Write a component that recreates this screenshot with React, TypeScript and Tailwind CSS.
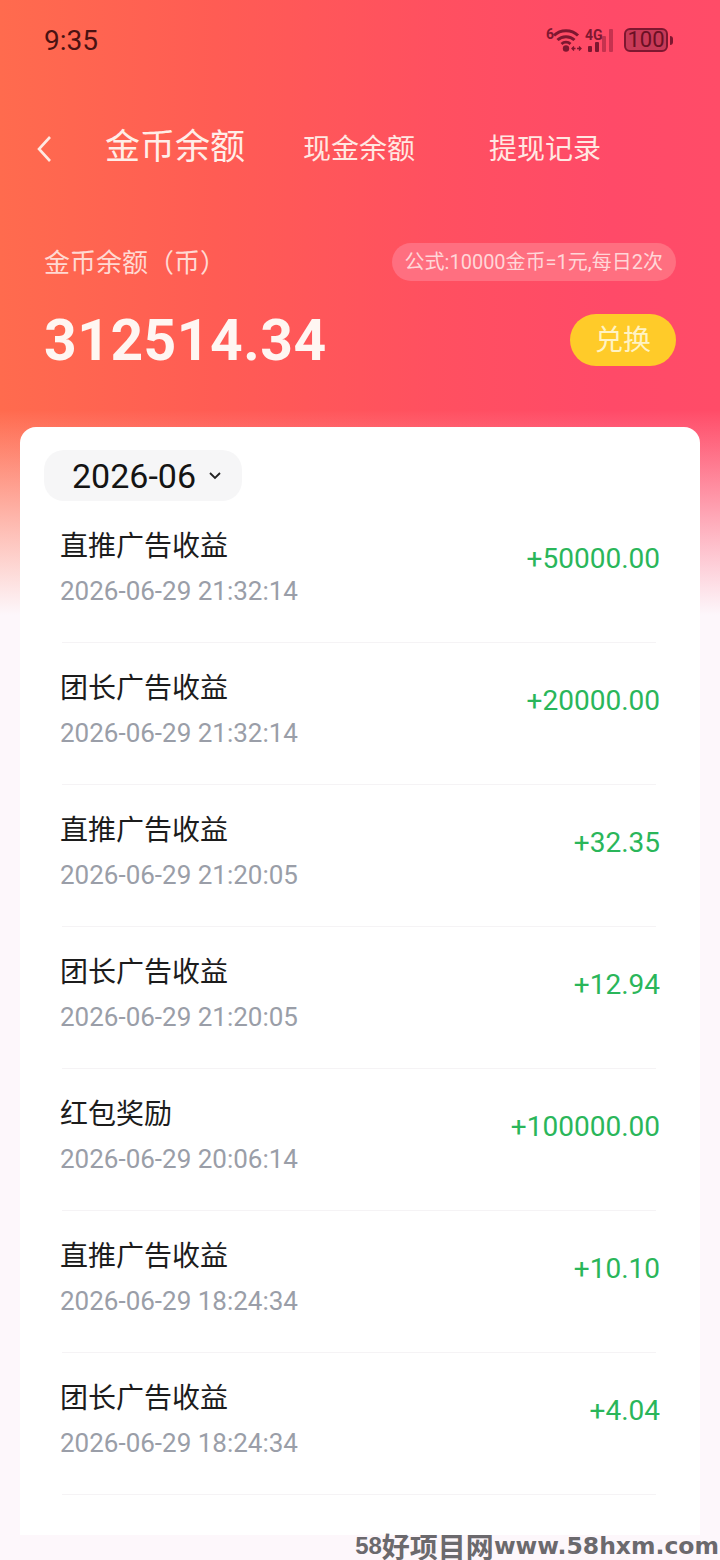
import React from "react";

const rows = [
  { title: "直推广告收益", time: "2026-06-29 21:32:14", amount: "+50000.00" },
  { title: "团长广告收益", time: "2026-06-29 21:32:14", amount: "+20000.00" },
  { title: "直推广告收益", time: "2026-06-29 21:20:05", amount: "+32.35" },
  { title: "团长广告收益", time: "2026-06-29 21:20:05", amount: "+12.94" },
  { title: "红包奖励", time: "2026-06-29 20:06:14", amount: "+100000.00" },
  { title: "直推广告收益", time: "2026-06-29 18:24:34", amount: "+10.10" },
  { title: "团长广告收益", time: "2026-06-29 18:24:34", amount: "+4.04" },
];

const font = "font-['Roboto','Noto_Sans_CJK_SC',sans-serif]";

function StatusIcons() {
  return (
    <div className="flex items-center text-[#7e1730]">
      <svg width="38" height="34" viewBox="0 -4 38 34" fill="none" stroke="currentColor">
        <text x="1" y="12" fontSize="14" fontWeight="700" fill="currentColor" stroke="none" fontFamily="Roboto">6</text>
        <path d="M9 8.5C15.5 2 26.5 2 33 8.5" strokeWidth="3" />
        <path d="M12.5 13C17 8.5 25 8.5 29.5 13" strokeWidth="3" />
        <path d="M16.5 17C19 14.5 23 14.5 25.5 17" strokeWidth="2.8" />
        <circle cx="21" cy="21.5" r="3.2" fill="currentColor" stroke="none" />
        <path d="M27 21.5h3.5M29 19.5l-2 2 2 2M32 21.5h3.5M34 19.5l2 2-2 2" strokeWidth="1.3" />
      </svg>
      <svg width="33" height="34" viewBox="0 -4 33 34" fill="currentColor" className="ml-[1px]">
        <text x="1" y="13" fontSize="14" fontWeight="700" fontFamily="Roboto">4G</text>
        <rect x="4" y="19" width="4" height="6" rx="1" />
        <rect x="11" y="15" width="4" height="10" rx="1" />
        <rect x="18" y="9" width="4" height="16" rx="1" opacity="0.45" />
        <rect x="25" y="2" width="4" height="23" rx="1" opacity="0.45" />
      </svg>
      <div className="ml-[7px] flex items-center gap-[2px]">
        <div className={`flex h-[24px] w-[44px] items-center justify-center rounded-[6px] border-2 border-[#7e1730] bg-[#c83a58] text-[22px] leading-none text-[#6a1024] ${font}`}>
          100
        </div>
        <div className="h-[9px] w-[3px] rounded-r-sm bg-[#7e1730]" />
      </div>
    </div>
  );
}

function Row({ title, time, amount }: { title: string; time: string; amount: string }) {
  return (
    <div className="relative flex h-[142px] items-start justify-between px-[60px] pt-[28px]">
      <div className="flex flex-col">
        <span className="text-[28px] leading-[36px] text-[#1c1c1c]">{title}</span>
        <span className="mt-[8px] text-[26px] leading-[36px] text-[#9a9ea8]">{time}</span>
      </div>
      <span className="mt-[12px] text-[28px] leading-[36px] text-[#2ab65a]">{amount}</span>
      <div className="absolute bottom-0 left-[62px] right-[64px] h-px bg-[#f5f3f5]" />
    </div>
  );
}

export default function App() {
  return (
    <div
      className={`relative flex h-[1560px] w-[720px] flex-col overflow-hidden bg-[linear-gradient(180deg,rgba(253,247,251,0)_0px,rgba(253,247,251,0)_410px,rgba(253,247,251,0.55)_520px,#fdf7fb_615px),linear-gradient(90deg,#ff6b4e_0%,#ff5c54_30%,#ff5060_60%,#ff4a68_85%,#ff4c68_100%)] ${font}`}
    >
      {/* status bar */}
      <div className="flex h-[80px] items-center justify-between pl-[44px] pr-[47px]">
        <span className="mt-[2px] text-[28px] leading-none text-[#4a1212]">9:35</span>
        <StatusIcons />
      </div>

      {/* navigation tabs */}
      <div className="flex h-[136px] items-center pl-[34px]">
        <svg width="22" height="32" viewBox="0 0 22 32" fill="none" stroke="#ffe9e2" strokeWidth="2.6" className="mt-[2px]">
          <path d="M16 4L5 16l11 12" />
        </svg>
        <span className="ml-[49px] text-[35px] text-[#ffeee8]">金币余额</span>
        <span className="ml-[58px] mt-[4px] text-[28px] text-[#ffe8e2]">现金余额</span>
        <span className="ml-[74px] mt-[4px] text-[28px] text-[#ffe8e2]">提现记录</span>
      </div>

      {/* balance summary */}
      <div className="mt-[26px] flex items-center justify-between px-[44px]">
        <span className="mt-[2px] text-[26px] leading-[38px] text-[#ffd9d2]">金币余额（币）</span>
        <span className="flex h-[38px] items-center rounded-full bg-[#ff6f80] px-[13px] text-[20px] text-[#ffd6d8]">
          公式:10000金币=1元,每日2次
        </span>
      </div>
      <div className="mt-[30px] flex items-center justify-between px-[44px]">
        <span className="mt-[3px] text-[57px] font-bold leading-[52px] tracking-[0.5px] text-[#fff6f2]">312514.34</span>
        <span className="flex h-[52px] w-[106px] items-center justify-center rounded-full bg-[#ffcb29] pt-[2px] text-[28px] text-[#fff3c4]">
          兑换
        </span>
      </div>

      {/* transaction list */}
      <div className="mx-[20px] mb-[25px] mt-[60px] flex-1 rounded-t-[16px] bg-white">
        <div className="ml-[24px] mt-[23px] flex h-[51px] w-[198px] items-center rounded-[20px] bg-[#f6f6f7] pl-[28px]">
          <span className="text-[34px] leading-none text-[#141414]">2026-06</span>
          <svg width="14" height="10" viewBox="0 0 14 10" fill="none" stroke="#222" strokeWidth="1.8" className="ml-[12px]">
            <path d="M2 2l5 5 5-5" />
          </svg>
        </div>
        <div className="-ml-[20px] w-[720px]">
          {rows.map((r, i) => (
            <Row key={i} {...r} />
          ))}
        </div>
      </div>

      {/* site mark in the corner */}
      <span className="absolute bottom-0 right-px flex items-center font-bold leading-[28px] text-[#6b696d]">
        <span className="font-['Liberation_Sans'] text-[24px]">58</span>
        <span className="font-['Noto_Sans_CJK_SC',sans-serif] text-[28px]">好项目网</span>
        <span className="font-['DejaVu_Sans',sans-serif] text-[23.5px]">www.58hxm.com</span>
      </span>
    </div>
  );
}
